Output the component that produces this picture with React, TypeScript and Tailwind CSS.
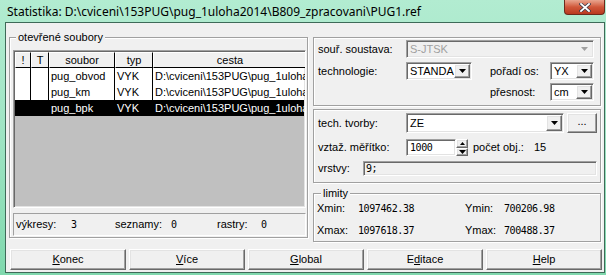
import React from 'react';

const sunken =
  'border border-t-[#a0a0a0] border-l-[#a0a0a0] border-b-white border-r-white shadow-[inset_1px_1px_0_#696969,inset_-1px_-1px_0_#e3e3e3]';
const raised =
  'border border-t-white border-l-white border-b-[#696969] border-r-[#696969] shadow-[inset_-1px_-1px_0_#a0a0a0,inset_1px_1px_0_#e3e3e3]';
const etched = 'border border-[#a0a0a0] shadow-[1px_1px_0_#fff,inset_1px_1px_0_#fff]';

function Arrow({ color = '#000' }: { color?: string }) {
  return (
    <svg width="7" height="4" viewBox="0 0 7 4">
      <path d="M0 0h7L3.5 4z" fill={color} />
    </svg>
  );
}

function Combo({ value, className = '', disabled = false }: { value: string; className?: string; disabled?: boolean }) {
  return (
    <div className={`flex p-[1px] ${sunken} ${disabled ? 'bg-[#f0f0f0]' : 'bg-white'} ${className}`}>
      <span className={`flex-1 pl-[2px] flex items-center ${disabled ? 'text-[#a0a0a0]' : 'text-black'}`}>{value}</span>
      <span className={`w-[16px] flex items-center justify-center bg-[#f0f0f0] ${disabled ? '' : raised}`}>
        <Arrow color={disabled ? '#a0a0a0' : '#000'} />
      </span>
    </div>
  );
}

const rows = [
  { name: 'pug_obvod', typ: 'VYK', path: 'D:\\cviceni\\153PUG\\pug_1uloha2014', sel: false },
  { name: 'pug_km', typ: 'VYK', path: 'D:\\cviceni\\153PUG\\pug_1uloha2014', sel: false },
  { name: 'pug_bpk', typ: 'VYK', path: 'D:\\cviceni\\153PUG\\pug_1uloha2014', sel: true },
];

const cols = ['w-[16px]', 'w-[18px]', 'w-[66px]', 'w-[38px]', 'w-[154px]'];

export default function App() {
  const ui = { fontFamily: '"Liberation Sans", Arial, sans-serif' };
  const mono = { fontFamily: '"DejaVu Sans Mono", monospace', fontSize: '10px', letterSpacing: '-0.4px' };
  return (
    <div
      className="w-[606px] h-[275px] overflow-hidden bg-gradient-to-b from-[#b2ecd1] via-[#9ee4c3] to-[#7fd8ad] text-[11px] text-black"
      style={ui}
    >
      {/* title bar */}
      <div className="h-[22px] flex items-start relative">
        <span className="pl-[7px] pt-[3px] text-[12px] text-black" style={{ fontFamily: '"Noto Sans", sans-serif' }}>
          Statistika: D:\cviceni\153PUG\pug_1uloha2014\B809_zpracovani\PUG1.ref
        </span>
        <div className="absolute right-[1px] top-0 w-[41px] h-[15px] rounded-b-[4px] border border-t-0 border-[#6b2a1c] bg-gradient-to-b from-[#e8a58f] via-[#d0573a] to-[#b9391f] flex items-center justify-center">
          <svg width="12" height="9" viewBox="0 0 12 9">
            <path d="M2 1l8 7M10 1L2 8" stroke="#3a3a4a" strokeWidth="3.2" strokeLinecap="square" />
            <path d="M2 1l8 7M10 1L2 8" stroke="#fff" strokeWidth="1.8" strokeLinecap="square" />
          </svg>
        </div>
      </div>

      {/* client */}
      <div className="ml-[5px] w-[600px] h-[251px] border border-[#3e6a58] bg-[#f0f0f0] flex flex-col">
        <div className="flex items-start pt-[14px] pl-[3px] h-[219px]">
          {/* left group */}
          <div className={`relative w-[299px] h-[201px] ${etched} flex flex-col pt-[12px] pl-[3px]`}>
            <span className="absolute -top-[8px] left-[6px] px-[2px] bg-[#f0f0f0] leading-[14px]">otevřené soubory</span>
            <div className={`w-[293px] h-[158px] ${sunken} p-[1px] flex flex-col overflow-hidden bg-[#c0c0c0]`}>
              <div className="flex h-[16px] shrink-0">
                {['!', 'T', 'soubor', 'typ', 'cesta'].map((h, i) => (
                  <div
                    key={h}
                    className={`${cols[i]} shrink-0 bg-[#f0f0f0] border-t border-l border-white border-r border-b border-r-black border-b-black flex items-center justify-center`}
                  >
                    {h}
                  </div>
                ))}
              </div>
              {rows.map((r) => (
                <div key={r.name} className={`flex h-[16px] shrink-0 ${r.sel ? 'bg-black text-white' : 'bg-white'}`}>
                  <div className={`${cols[0]} shrink-0 border-r border-black`} />
                  <div className={`${cols[1]} shrink-0 border-r border-black`} />
                  <div className={`${cols[2]} shrink-0 border-r border-black pl-[2px] flex items-center overflow-hidden whitespace-nowrap`}>{r.name}</div>
                  <div className={`${cols[3]} shrink-0 border-r border-black pl-[2px] flex items-center`}>{r.typ}</div>
                  <div className={`${cols[4]} shrink-0 pl-[2px] flex items-center overflow-hidden whitespace-nowrap`}>{r.path}</div>
                </div>
              ))}
            </div>
            <div className={`mt-[5px] w-[293px] h-[23px] border border-t-[#a0a0a0] border-l-[#a0a0a0] border-b-white border-r-white flex items-center pl-[2px]`}>
              <span className="w-[55px]">výkresy:</span>
              <span className="w-[44px]" style={mono}>3</span>
              <span className="w-[56px]">seznamy:</span>
              <span className="w-[46px]" style={mono}>0</span>
              <span className="w-[44px]">rastry:</span>
              <span style={mono}>0</span>
            </div>
          </div>

          {/* right column */}
          <div className="ml-[5px] w-[288px] flex flex-col">
            <div className={`h-[69px] ${etched} flex flex-col pl-[4px] pt-[2px]`}>
              <div className="flex h-[18px] items-center">
                <span className="w-[88px]">souř. soustava:</span>
                <Combo value="S-JTSK" disabled className="w-[188px] h-[18px]" />
              </div>
              <div className="flex h-[18px] items-center mt-[4px]">
                <span className="w-[88px]">technologie:</span>
                <Combo value="STANDA" className="w-[66px] h-[18px]" />
                <span className="ml-[18px] w-[60px]">pořadí os:</span>
                <Combo value="YX" className="w-[44px] h-[18px]" />
              </div>
              <div className="flex h-[18px] items-center mt-[3px]">
                <span className="ml-[172px] w-[60px]">přesnost:</span>
                <Combo value="cm" className="w-[44px] h-[18px]" />
              </div>
            </div>

            <div className={`mt-[3px] h-[74px] ${etched} flex flex-col pl-[4px] pt-[3px]`}>
              <div className="flex h-[20px] items-center">
                <span className="w-[88px]">tech. tvorby:</span>
                <Combo value="ZE" className="w-[158px] h-[20px]" />
                <button className={`ml-[3px] w-[30px] h-[20px] bg-[#f0f0f0] ${raised} leading-none pb-[4px]`}>...</button>
              </div>
              <div className="flex h-[17px] items-center mt-[6px]">
                <span className="w-[88px]">vztaž. měřítko:</span>
                <div className={`w-[50px] h-[17px] bg-white ${sunken} pl-[3px] flex items-center`} style={mono}>
                  1000
                </div>
                <div className="w-[12px] h-[17px] flex flex-col">
                  <div className={`flex-1 bg-[#f0f0f0] ${raised} flex items-center justify-center`}>
                    <svg width="5" height="3" viewBox="0 0 5 3"><path d="M0 3h5L2.5 0z" fill="#000" /></svg>
                  </div>
                  <div className={`flex-1 bg-[#f0f0f0] ${raised} flex items-center justify-center`}>
                    <Arrow />
                  </div>
                </div>
                <span className="ml-[5px] w-[61px]">počet obj.:</span>
                <span>15</span>
              </div>
              <div className="flex h-[15px] items-center mt-[5px]">
                <span className="w-[45px]">vrstvy:</span>
                <div className={`w-[234px] h-[15px] ${sunken} pl-[2px] flex items-center`} style={mono}>
                  9;
                </div>
              </div>
            </div>

            <div className={`relative mt-[10px] h-[49px] ${etched} flex flex-col pl-[3px] pt-[8px] gap-[10px]`}>
              <span className="absolute -top-[8px] left-[7px] px-[2px] bg-[#f0f0f0] leading-[14px]">limity</span>
              <div className="flex items-center h-[12px]">
                <span className="w-[41px]">Xmin:</span>
                <span className="w-[107px]" style={mono}>1097462.38</span>
                <span className="w-[39px]">Ymin:</span>
                <span style={mono}>700206.98</span>
              </div>
              <div className="flex items-center h-[12px]">
                <span className="w-[41px]">Xmax:</span>
                <span className="w-[107px]" style={mono}>1097618.37</span>
                <span className="w-[39px]">Ymax:</span>
                <span style={mono}>700488.37</span>
              </div>
            </div>
          </div>
        </div>

        {/* buttons */}
        <div className="flex gap-[3px] pl-[4px] mt-[7px]">
          {[
            ['K', 'onec'],
            ['V', 'íce'],
            ['G', 'lobal'],
            ['Ed', 'itace'],
            ['H', 'elp'],
          ].map(([a, b]) => (
            <button key={a + b} className={`w-[116px] h-[21px] bg-[#f0f0f0] ${raised} flex items-center justify-center`}>
              {a === 'Ed' ? (
                <span>
                  E<u>d</u>
                  {b}
                </span>
              ) : (
                <span>
                  <u>{a}</u>
                  {b}
                </span>
              )}
            </button>
          ))}
        </div>
      </div>
    </div>
  );
}
